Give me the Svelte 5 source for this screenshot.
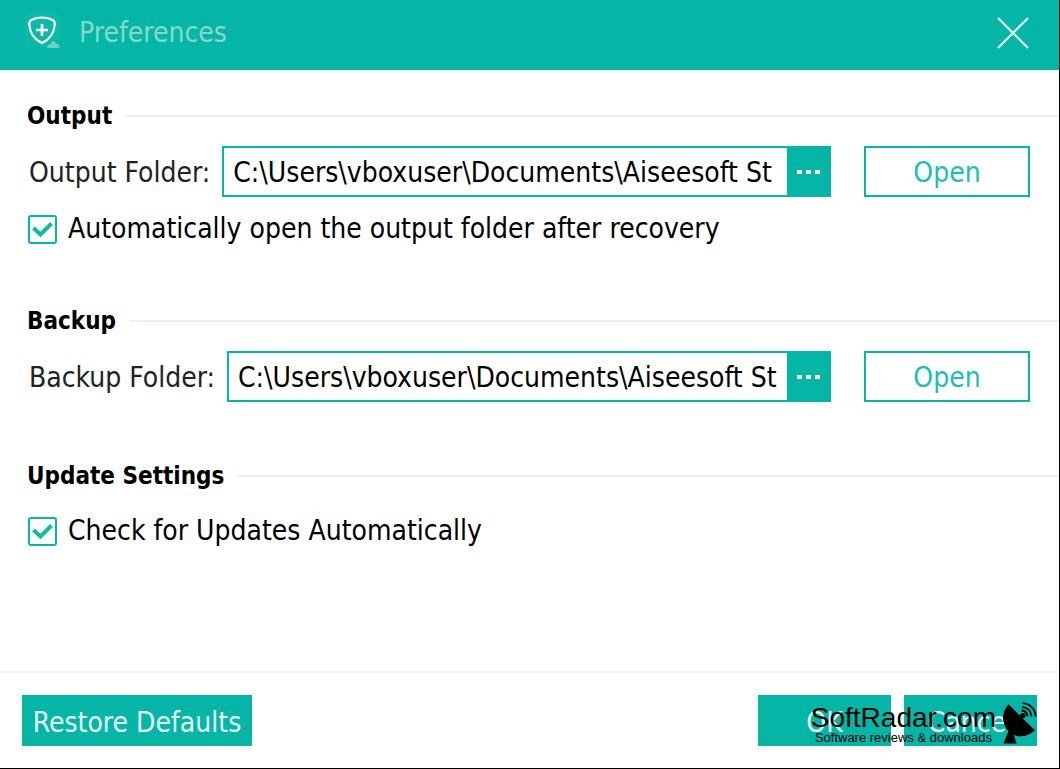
<script>
  let folders = $state({
    output: 'C:\\Users\\vboxuser\\Documents\\Aiseesoft St',
    backup: 'C:\\Users\\vboxuser\\Documents\\Aiseesoft St'
  });
  let autoOpen = $state(true);
  let autoUpdate = $state(true);
</script>

{#snippet folderRow(id, label)}
  <div class="row">
    <label for={id}>{label}</label>
    <div class="path">
      <input {id} type="text" bind:value={folders[id]} spellcheck="false" />
      <button class="browse" type="button" aria-label="Browse">
        <svg width="24" height="6" viewBox="0 0 24 6" fill="#fff" aria-hidden="true">
          <rect x="1" y="1" width="5" height="4" />
          <rect x="10" y="1" width="5" height="4" />
          <rect x="19" y="1" width="5" height="4" />
        </svg>
      </button>
    </div>
    <button class="outline" type="button">Open</button>
  </div>
{/snippet}

<div class="window">
  <header>
    <svg class="logo" width="36" height="36" viewBox="0 0 36 36" aria-hidden="true">
      <rect x="0" y="0" width="34" height="34" rx="4" fill="#0cb9a9" />
      <path d="M17 4.500C20.500 4.500 25 5.300 28.300 7.300C29.600 8.200 29.900 9.500 29.700 12C29 20.500 24.500 26.500 17 30C9.500 26.500 5 20.500 4.300 12C4.100 9.500 4.400 8.200 5.700 7.300C9 5.300 13.500 4.500 17 4.500Z" fill="none" stroke="#fff" stroke-width="2.200" />
      <path d="M17 11V23M11 17H23" stroke="#fff" stroke-width="2.600" />
      <path d="M22 35C22 32 24 31 26 31C26 27 30 27 31 31C34 31 35 33 34 35Z" fill="#6bd0c5" />
    </svg>
    <h1>Preferences</h1>
    <button class="close" type="button" aria-label="Close">
      <svg width="34" height="34" viewBox="0 0 34 34" aria-hidden="true">
        <path d="M2 2L32 32M32 2L2 32" stroke="#e6faf7" stroke-width="2.200" />
      </svg>
    </button>
  </header>

  <main>
    <section>
      <h2>Output</h2>
      {@render folderRow('output', 'Output Folder:')}
      <label class="check">
        <input type="checkbox" bind:checked={autoOpen} />
        Automatically open the output folder after recovery
      </label>
    </section>

    <section>
      <h2>Backup</h2>
      {@render folderRow('backup', 'Backup Folder:')}
    </section>

    <section>
      <h2>Update Settings</h2>
      <label class="check">
        <input type="checkbox" bind:checked={autoUpdate} />
        Check for Updates Automatically
      </label>
    </section>
  </main>

  <footer>
    <button class="solid restore" type="button">Restore Defaults</button>
    <button class="solid" type="button">OK</button>
    <button class="solid" type="button">Cancel</button>
  </footer>

  <div class="watermark">
    <div>
      <div class="brand">SoftRadar.com</div>
      <div class="tagline">Software reviews &amp; downloads</div>
    </div>
    <svg width="36" height="44" viewBox="0 0 36 44" aria-hidden="true">
      <path d="M6.500 2.300C-0.500 10 -0.500 20 5 27.500C11.500 36 24 37 33 28.300L20.800 16.500L22.500 14L19.500 11.500L17.500 13.200Z" />
      <path d="M7 28L1.500 41.500H14.500L11 30Z" />
      <circle cx="21" cy="13.500" r="2.600" />
      <g fill="none" stroke="#000" stroke-width="1.800">
        <path d="M19.500 8.500C23.500 8.800 25.300 11 25.500 14.500" />
        <path d="M20 5C25.500 5.300 29.200 9 29.500 14.500" />
        <path d="M20.500 1.200C28 1.700 33.200 7 33.500 14.500" />
      </g>
    </svg>
  </div>
</div>

<style>
  :global(body) {
    margin: 0;
  }

  .window {
    --teal: #05b5a6;
    position: relative;
    display: flex;
    flex-direction: column;
    box-sizing: border-box;
    min-height: 100vh;
    border-right: 1px solid #000;
    border-bottom: 1px solid #000;
    background: #fff;
    color: #111;
    font-family: 'DejaVu Sans Condensed', 'Noto Sans', sans-serif;
    font-size: 28px;
    line-height: 36px;
  }

  button,
  input {
    margin: 0;
    padding: 0;
    border: 0;
    border-radius: 0;
    background: none;
    font: inherit;
    color: inherit;
  }

  header {
    display: flex;
    align-items: center;
    box-sizing: border-box;
    height: 70px;
    padding: 0 29px 0 25px;
    background: var(--teal);
  }

  h1 {
    flex: 1;
    margin: 0 0 4px 18px;
    font-size: 28px;
    font-weight: 400;
    color: #83dacb;
  }

  .logo {
    margin-bottom: 8px;
  }

  .close {
    display: flex;
    margin-bottom: 4px;
  }

  main {
    flex: 1;
    display: flex;
    flex-direction: column;
    gap: 56px;
    padding: 28px 0 24px;
  }

  h2 {
    display: flex;
    align-items: center;
    gap: 13px;
    margin: 0 0 12px;
    padding-left: 27px;
    font-size: 24px;
    font-weight: 700;
    line-height: 36px;
    color: #000;
  }

  h2::after {
    content: '';
    flex: 1;
    height: 2px;
    background: #eaf0f6;
  }

  .row {
    display: flex;
    align-items: center;
    padding: 0 29px;
  }

  .row label {
    margin-right: 12px;
    padding-top: 2px;
    color: #222;
  }

  .path {
    flex: 1;
    display: flex;
    box-sizing: border-box;
    min-width: 0;
    height: 51px;
    border: 2px solid var(--teal);
  }

  .path input {
    flex: 1;
    min-width: 0;
    padding: 2px 6px 0 9px;
    color: #000;
    outline: 0;
  }

  .browse {
    display: flex;
    align-items: center;
    justify-content: center;
    width: 42px;
    background: var(--teal);
  }

  .outline {
    box-sizing: border-box;
    width: 166px;
    height: 51px;
    margin-left: 33px;
    padding-top: 2px;
    border: 2px solid var(--teal);
    color: #21bdb2;
  }

  .check {
    display: flex;
    align-items: center;
    gap: 11px;
    padding: 0 28px;
    color: #000;
  }

  .row + .check {
    margin-top: 14px;
  }

  h2 + .check {
    margin-top: 19px;
  }

  .check input {
    appearance: none;
    box-sizing: border-box;
    width: 29px;
    height: 29px;
    border: 2px solid var(--teal);
    border-radius: 3px;
  }

  .check input:checked {
    background: url("data:image/svg+xml,%3Csvg xmlns='http://www.w3.org/2000/svg' viewBox='0 0 25 25'%3E%3Cpath d='M3.500 11L10.500 17.500L21.500 6.500' fill='none' stroke='%2314b9aa' stroke-width='4'/%3E%3C/svg%3E") center / 100% no-repeat;
  }

  footer {
    display: flex;
    gap: 13px;
    padding: 22px;
    border-top: 2px solid #f0f3f4;
  }

  .solid {
    width: 133px;
    height: 51px;
    padding-top: 4px;
    background: var(--teal);
    color: #e8faf5;
  }

  .restore {
    width: 230px;
    margin-right: auto;
  }

  .watermark {
    position: absolute;
    right: 21px;
    bottom: 22px;
    display: flex;
    align-items: flex-end;
    gap: 6px;
    font-family: 'Liberation Sans', Arial, sans-serif;
    color: #000;
    text-align: center;
    pointer-events: none;
  }

  .brand {
    font-size: 28px;
    line-height: 24px;
  }

  .tagline {
    font-size: 13px;
    line-height: 16px;
  }
</style>
